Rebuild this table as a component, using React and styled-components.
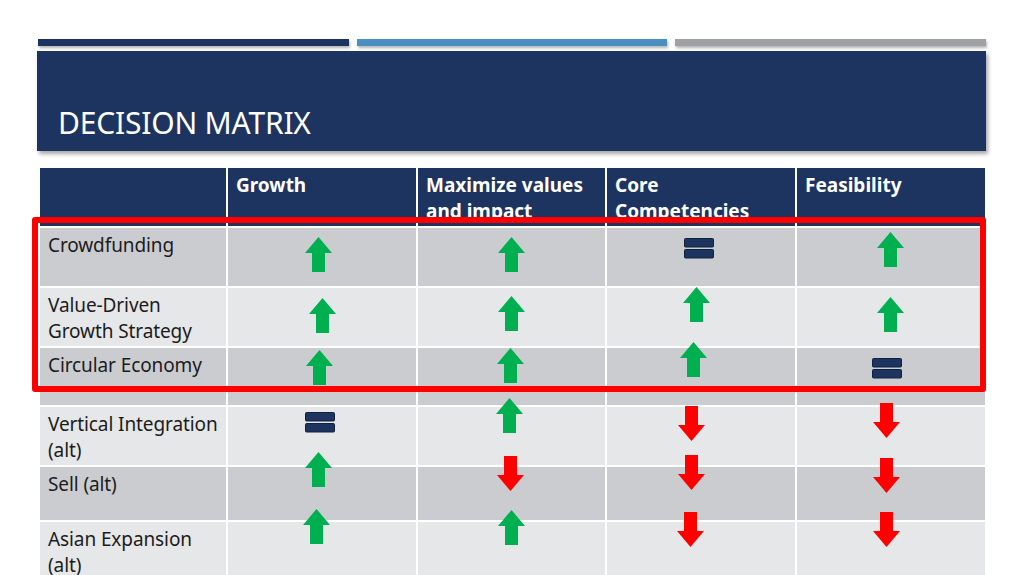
import React from 'react';
import styled, {createGlobalStyle} from 'styled-components';

const GlobalStyle = createGlobalStyle`
  body {
    margin: 0;
    background: #ffffff;
    font-family: "Noto Sans", "Open Sans", sans-serif;
  }
`;

const Slide = styled.div`
  position: relative;
  width: 1024px;
  height: 575px;
  overflow: hidden;
  background: #ffffff;
  padding-top: 39px;
  box-sizing: border-box;
`;

const TopBars = styled.div`
  display: flex;
  gap: 8px;
  margin: 0 38px 0 38px;
  height: 7px;
`;

const TopBar = styled.div`
  flex: 1;
  background: ${(p) => p.$color};
  box-shadow: 1px 2px 3px rgba(0, 0, 0, 0.3);
`;

const TitlePanel = styled.div`
  margin: 5px 38px 0 37px;
  height: 100px;
  box-sizing: border-box;
  padding: 54px 0 0 21px;
  background: #1d3461;
  box-shadow: 2px 3px 4px rgba(0, 0, 0, 0.35);
`;

const Title = styled.h1`
  margin: 0;
  font-size: 30px;
  line-height: 36px;
  font-weight: 400;
  color: #ffffff;
  letter-spacing: -0.2px;
`;

const Matrix = styled.div`
  display: grid;
  grid-template-columns: 186px 188px 187px 188px 188px;
  grid-template-rows: 58px 58px 58px 57px 58px 53px 60px;
  gap: 2px;
  margin: 17px 0 0 40px;
`;

const HeadCell = styled.div`
  background: #1d3461;
  color: #ffffff;
  font-weight: 700;
  font-size: 19px;
  line-height: 26px;
  padding: 4px 8px 0 8px;
  overflow: hidden;
`;

const Cell = styled.div`
  background: ${(p) => (p.$dark ? '#cbccd0' : '#e6e7e9')};
  color: #1c1c1c;
  font-size: 19px;
  line-height: 26px;
  padding: 4px 8px 0 8px;
  display: flex;
  flex-direction: column;
  align-items: center;
`;

const LabelCell = styled(Cell)`
  align-items: flex-start;
  padding-right: 0;
  letter-spacing: -0.1px;
`;

const Mark = styled.div`
  display: flex;
  transform: translate(${(p) => p.$dx}px, ${(p) => p.$dy}px);
`;

const Highlight = styled.div`
  position: absolute;
  left: 32px;
  top: 217px;
  width: 954px;
  height: 175px;
  box-sizing: border-box;
  border: 6px solid #ff0000;
  border-radius: 3px;
`;

function UpArrow() {
  return (
    <svg width="27" height="35" viewBox="0 0 27 35">
      <polygon points="13.5,0 27,16 20,16 20,35 7,35 7,16 0,16" fill="#00b050" />
    </svg>
  );
}

function DownArrow() {
  return (
    <svg width="27" height="35" viewBox="0 0 27 35">
      <polygon points="7,0 20,0 20,19 27,19 13.5,35 0,19 7,19" fill="#ff0000" />
    </svg>
  );
}

function Equal() {
  return (
    <svg width="30" height="21" viewBox="0 0 30 21">
      <rect x="0.5" y="0.5" width="29" height="8.5" rx="1" fill="#1d3461" stroke="#10203f" />
      <rect x="0.5" y="11.5" width="29" height="8.5" rx="1" fill="#1d3461" stroke="#10203f" />
    </svg>
  );
}

const icons = {up: UpArrow, down: DownArrow, eq: Equal};

const columns = ['', 'Growth', 'Maximize values and impact', 'Core Competencies', 'Feasibility'];

// each mark: [kind, dx from cell centre, dy from row top]
const rows = [
  {label: 'Crowdfunding', marks: [['up', -4, 5], ['up', 0, 5], ['eq', -2, 6], ['up', -1, 0]]},
  {label: 'Value-Driven Growth Strategy', marks: [['up', 0, 6], ['up', 0, 4], ['up', -5, -5], ['up', -1, 5]]},
  {label: 'Circular Economy', marks: [['up', -3, -2], ['up', -1, -4], ['up', -8, -10], ['eq', -4, 6]]},
  {label: 'Vertical Integration (alt)', marks: [['eq', -2, 1], ['up', -2, -13], ['down', -10, -5], ['down', -5, -8]]},
  {label: 'Sell (alt)', marks: [['up', -4, -19], ['down', -1, -15], ['down', -10, -16], ['down', -5, -13]]},
  {label: 'Asian Expansion (alt)', marks: [['up', -6, -17], ['up', 0, -16], ['down', -11, -14], ['down', -5, -14]]},
];

export default function App() {
  return (
    <>
      <GlobalStyle />
      <Slide>
        <TopBars>
          <TopBar $color="#1d3461" />
          <TopBar $color="#4a8fc1" />
          <TopBar $color="#9fa1a5" />
        </TopBars>
        <TitlePanel>
          <Title>DECISION MATRIX</Title>
        </TitlePanel>
        <Matrix>
          {columns.map((c, i) => (
            <HeadCell key={i}>{c}</HeadCell>
          ))}
          {rows.map((row, r) => (
            <React.Fragment key={row.label}>
              <LabelCell $dark={r % 2 === 0}>{row.label}</LabelCell>
              {row.marks.map(([kind, dx, dy], m) => {
                const Icon = icons[kind];
                return (
                  <Cell key={m} $dark={r % 2 === 0}>
                    <Mark $dx={dx} $dy={dy}>
                      <Icon />
                    </Mark>
                  </Cell>
                );
              })}
            </React.Fragment>
          ))}
          {columns.map((c, i) => (
            <Cell key={'tail' + i} $dark />
          ))}
        </Matrix>
        <Highlight />
      </Slide>
    </>
  );
}
